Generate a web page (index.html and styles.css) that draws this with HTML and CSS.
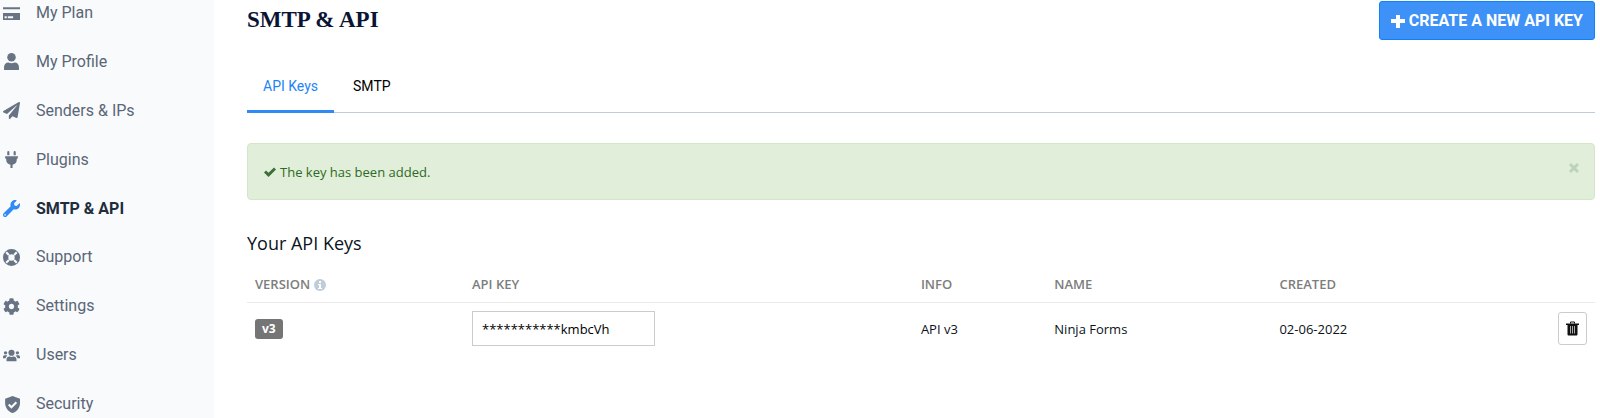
FILE: index.html
```html
<!DOCTYPE html>
<html lang="en">
<head>
  <meta charset="UTF-8">
  <meta name="viewport" content="width=device-width, initial-scale=1.0">
  <title>SMTP &amp; API</title>
  <link rel="stylesheet" href="styles.css">
</head>
<body>
  <div class="layout">
    <nav class="sidebar">
      <a class="nav-item" href="#">
        <svg class="nav-icon" viewBox="0 0 16 16"><path d="M0 2h16v2H0zM0 7.500h16v6.500H0zM1.500 10.500v2h2v-2zM4.500 10.500v2h5v-2z" fill-rule="evenodd"/></svg>
        My Plan
      </a>
      <a class="nav-item" href="#">
        <svg class="nav-icon" viewBox="0 0 16 16"><circle cx="8" cy="4" r="4"/><path d="M1 16v-3a4 4 0 0 1 4-4c2 1 4 1 6 0a4 4 0 0 1 4 4v3z"/></svg>
        My Profile
      </a>
      <a class="nav-item" href="#">
        <svg class="nav-icon" viewBox="0 0 512 512"><path d="M476 3.200 12.500 270.600c-18.100 10.400-15.800 35.600 2.200 43.200L121 358.400l287.300-253.200c5.500-4.900 13.300 2.600 8.600 8.300L176 407v80.500c0 23.600 28.500 32.900 42.500 15.800L282 426l124.600 52.200c14.200 6 30.400-2.900 33-18.200l72-432C515 7.800 493.300-6.800 476 3.200z"/></svg>
        Senders &amp; IPs
      </a>
      <a class="nav-item" href="#">
        <svg class="nav-icon" viewBox="0 0 16 16"><path d="M4 1a1 1 0 0 1 2 0v3H4zM10 1a1 1 0 0 1 2 0v3h-2zM2 5h12v2h-1v1a5 5 0 0 1-4 4.900V16H7v-3.100A5 5 0 0 1 3 8V7H2z"/></svg>
        Plugins
      </a>
      <a class="nav-item active" href="#">
        <svg class="nav-icon" viewBox="0 0 512 512"><path d="M507.700 109.100c-2.200-9-13.500-12.100-20.100-5.500l-74.400 74.400-67.900-11.300L334 98.900l74.400-74.400c6.600-6.600 3.400-17.900-5.700-20.200-47.400-11.700-99.600.9-136.600 37.900-39.600 39.600-50.500 97.100-34.100 147.200L18.700 402.800c-25 25-25 65.500 0 90.500s65.500 25 90.500 0l213.200-213.200c50.100 16.700 107.500 5.700 147.400-34.200 37.100-37.100 49.700-89.300 37.900-136.800zM64 472c-13.200 0-24-10.800-24-24s10.700-24 24-24 24 10.700 24 24-10.700 24-24 24z"/></svg>
        SMTP &amp; API
      </a>
      <a class="nav-item" href="#">
        <svg class="nav-icon" viewBox="0 0 16 16"><path fill-rule="evenodd" d="M8 0a8 8 0 1 0 0 16A8 8 0 0 0 8 0zm0 5a3 3 0 1 1 0 6 3 3 0 0 1 0-6z"/><path class="icon-gap" d="M5.600 5.600 3 3M10.400 5.600 13 3M5.600 10.400 3 13M10.400 10.400 13 13"/></svg>
        Support
      </a>
      <a class="nav-item" href="#">
        <svg class="nav-icon" viewBox="0 0 512 512"><path d="M487.400 315.700l-42.600-24.600c4.300-23.200 4.300-47 0-70.200l42.600-24.600c4.900-2.800 7.100-8.600 5.500-14-11.100-35.600-30-67.800-54.700-94.600-3.800-4.100-10-5.100-14.800-2.300L380.800 110c-17.900-15.400-38.500-27.300-60.800-35.100V25.800c0-5.600-3.900-10.500-9.400-11.700-36.700-8.200-74.300-7.800-109.200 0-5.500 1.200-9.400 6.100-9.400 11.700V75c-22.200 7.900-42.800 19.800-60.800 35.100L88.700 85.500c-4.900-2.800-11-1.900-14.800 2.300-24.700 26.700-43.600 58.900-54.700 94.600-1.700 5.400.6 11.200 5.500 14L67.300 221c-4.300 23.200-4.300 47 0 70.200l-42.600 24.600c-4.900 2.800-7.100 8.600-5.500 14 11.100 35.600 30 67.800 54.700 94.600 3.800 4.100 10 5.100 14.800 2.300l42.600-24.600c17.900 15.400 38.500 27.300 60.800 35.100v49.200c0 5.600 3.900 10.500 9.400 11.700 36.700 8.200 74.300 7.800 109.200 0 5.500-1.200 9.400-6.100 9.400-11.700v-49.200c22.200-7.900 42.800-19.800 60.800-35.100l42.600 24.600c4.900 2.800 11 1.900 14.800-2.300 24.700-26.700 43.600-58.900 54.700-94.600 1.500-5.500-.7-11.300-5.600-14.100zM256 336c-44.100 0-80-35.900-80-80s35.900-80 80-80 80 35.900 80 80-35.900 80-80 80z"/></svg>
        Settings
      </a>
      <a class="nav-item" href="#">
        <svg class="nav-icon" viewBox="0 0 16 16"><circle cx="8" cy="5.400" r="2.900"/><circle cx="2.400" cy="5.500" r="1.600"/><circle cx="13.600" cy="5.500" r="1.600"/><path d="M3.300 13.500V12c0-2 1.200-3 2.700-3q2 .8 4 0c1.500 0 2.700 1 2.700 3v1.500zM0 10.500V9.400c0-1 .7-1.600 1.600-1.600h1.600c.4 0 .8.200 1 .4-1 .6-1.600 1.400-1.700 2.300zM16 10.500V9.400c0-1-.7-1.600-1.600-1.600h-1.600c-.4 0-.8.200-1 .4 1 .6 1.600 1.400 1.700 2.300z"/></svg>
        Users
      </a>
      <a class="nav-item" href="#">
        <svg class="nav-icon" viewBox="0 0 16 16"><path d="M9 0l7 2.700v3.800c0 4.500-2.800 8-7 9.500-4.200-1.500-7-5-7-9.500V2.700z"/><path class="icon-gap" d="M5.400 8l2.500 2.600 4.700-4.800"/></svg>
        Security
      </a>
    </nav>

    <main class="content">
      <header class="page-header">
        <h1>SMTP &amp; API</h1>
        <button class="btn-create" type="button">
          <svg class="plus-icon" viewBox="0 0 14 14"><path d="M5 1h4v4h5v4H9v5H5V9H0V5h5z"/></svg>
          CREATE A NEW API KEY
        </button>
      </header>

      <div class="tabs">
        <a class="tab active" href="#">API Keys</a>
        <a class="tab" href="#">SMTP</a>
      </div>

      <div class="alert" role="status">
        <svg class="check-icon" viewBox="0 0 12 12"><path d="M0 6.500 2 4.500l2.500 2.300L10 1.500l2 2L4.500 11z"/></svg>
        <span>The key has been added.</span>
        <button class="alert-close" type="button" aria-label="Close">
          <svg viewBox="0 0 10 10"><path d="M1 1l8 8M9 1l-8 8"/></svg>
        </button>
      </div>

      <h2>Your API Keys</h2>
      <table class="keys">
        <thead>
          <tr>
            <th class="col-version">VERSION <svg class="info-icon" viewBox="0 0 12 12"><circle cx="6" cy="6" r="6"/><path d="M5 2h2v2H5zM4 5h3v4h1v1H4V9h1V6H4z"/></svg></th>
            <th class="col-key"><label for="api-key">API KEY</label></th>
            <th class="col-info">INFO</th>
            <th class="col-name">NAME</th>
            <th class="col-created">CREATED</th>
            <th></th>
          </tr>
        </thead>
        <tbody>
          <tr>
            <td><span class="badge">v3</span></td>
            <td><input class="key-input" id="api-key" type="text" value="***********kmbcVh" readonly></td>
            <td>API v3</td>
            <td>Ninja Forms</td>
            <td>02-06-2022</td>
            <td class="actions">
              <button class="btn-delete" type="button" aria-label="Delete">
                <svg viewBox="0 0 13 15"><path d="M4.500 2.500V1h4v1.500"/><path d="M0 2.500h13V4H0zM1.500 4h10v9.500a1 1 0 0 1-1 1h-8a1 1 0 0 1-1-1z" fill="#111" stroke="none"/><path class="trash-slats" d="M4.500 5v7.500M6.500 5v7.500M8.500 5v7.500"/></svg>
              </button>
            </td>
          </tr>
        </tbody>
      </table>
    </main>
  </div>
</body>
</html>
```

FILE: styles.css
```css
* {
  box-sizing: border-box;
}
body {
  margin: 0;
  font-family: "Open Sans", sans-serif;
  font-size: 13px;
  line-height: 20px;
  color: #0b1220;
  background-color: #fff;
}
.layout {
  display: flex;
  height: 100vh;
  overflow: hidden;
}

/* sidebar */
.sidebar {
  flex: 0 0 214px;
  display: flex;
  flex-direction: column;
  justify-content: space-between;
  padding: 0 0 1px 3px;
  background-color: #f9fafc;
}
.nav-item {
  display: flex;
  align-items: center;
  gap: 16px;
  height: 26px;
  font-family: Roboto, sans-serif;
  font-size: 16px;
  color: #596677;
  text-decoration: none;
}
.nav-icon {
  width: 17px;
  height: 17px;
  fill: #687484;
}
.nav-item.active {
  font-weight: bold;
  color: #1f2d3d;
}
.nav-item.active .nav-icon {
  fill: #2f8af5;
}
.icon-gap {
  fill: none;
  stroke: #f9fafc;
  stroke-width: 2;
}

/* main column */
.content {
  flex: 1;
  padding: 1px 5px 0 33px;
}
.page-header {
  display: flex;
  justify-content: space-between;
}
h1 {
  margin: 0;
  font-family: "Liberation Serif", serif;
  font-size: 23px;
  line-height: 38px;
  color: #0a1536;
}
.btn-create {
  display: flex;
  align-items: center;
  gap: 4px;
  height: 39px;
  padding: 0 11px;
  font-family: Roboto, sans-serif;
  font-size: 16px;
  font-weight: bold;
  color: #fff;
  background-color: #3d91f7;
  border: 1px solid #0d82f9;
  border-radius: 3px;
  cursor: pointer;
}
.plus-icon {
  width: 14px;
  height: 14px;
  fill: #fff;
}
.tabs {
  display: flex;
  gap: 3px;
  margin-top: 22px;
  border-bottom: 1px solid #c0ccda;
}
.tab {
  height: 51px;
  margin-bottom: -1px;
  padding: 14px 16px 0;
  font-family: Roboto, sans-serif;
  font-size: 14px;
  color: #000;
  text-decoration: none;
  border-bottom: 3px solid transparent;
}
.tab.active {
  color: #1b84f7;
  border-bottom-color: #2f8af5;
}
.alert {
  display: flex;
  align-items: center;
  gap: 4px;
  height: 57px;
  margin-top: 30px;
  padding: 0 15px 0 16px;
  color: #2d6a23;
  background-color: #e1efda;
  border: 1px solid #d3e7c8;
  border-radius: 4px;
}
.check-icon {
  width: 12px;
  height: 12px;
  fill: #3c7038;
}
.alert-close {
  display: flex;
  margin: 0 0 8px auto;
  padding: 0;
  background: none;
  border: none;
  cursor: pointer;
}
.alert-close svg {
  width: 10px;
  height: 10px;
  stroke: #bdd3b9;
  stroke-width: 3;
}

/* api keys table */
h2 {
  margin: 31px 0 17px;
  font-size: 18px;
  font-weight: normal;
  line-height: 24px;
}
.keys {
  width: 100%;
  table-layout: fixed;
  border-collapse: collapse;
}
.keys th {
  padding: 2px 8px 8px;
  font-weight: 600;
  text-align: left;
  color: #7d7d7d;
  border-bottom: 1px solid #ebebeb;
}
.keys td {
  padding: 8px;
}
.col-version {
  width: 16.1%;
}
.col-key {
  width: 33.3%;
}
.col-info {
  width: 9.9%;
}
.col-name {
  width: 16.7%;
}
.col-created {
  width: 12%;
}
.info-icon {
  width: 12px;
  height: 12px;
  vertical-align: -2px;
  fill: #c0ccda;
}
.info-icon path {
  fill: #fff;
}
.badge {
  display: inline-block;
  padding: 0 7px;
  font-size: 12px;
  font-weight: bold;
  color: #fff;
  background-color: #757575;
  border-radius: 3px;
}
.key-input {
  display: block;
  width: 183px;
  height: 35px;
  padding: 0 9px;
  font: inherit;
  color: #000;
  background-color: #fff;
  border: 1px solid #ccc;
}
.keys .actions {
  text-align: right;
}
.btn-delete {
  display: inline-flex;
  align-items: center;
  justify-content: center;
  width: 29px;
  height: 33px;
  padding: 0;
  vertical-align: middle;
  background-color: #fff;
  border: 1px solid #ccc;
  border-radius: 3px;
  cursor: pointer;
}
.btn-delete svg {
  width: 13px;
  height: 15px;
  fill: none;
  stroke: #111;
}
.btn-delete .trash-slats {
  stroke: #aaa;
}
```
